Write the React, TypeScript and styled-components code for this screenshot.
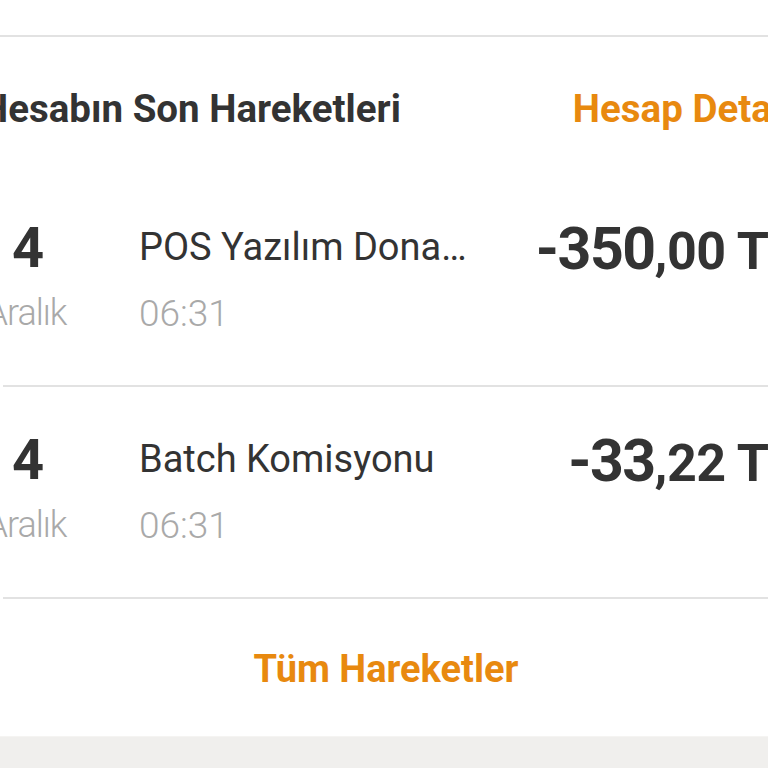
import styled, { createGlobalStyle } from "styled-components";

const GlobalStyle = createGlobalStyle`
  html, body {
    margin: 0;
    padding: 0;
    background: #ffffff;
  }
  body {
    font-family: Roboto, "Noto Sans", Arial, sans-serif;
    color: #333333;
    overflow: hidden;
  }
`;

type Movement = {
  day: string;
  month: string;
  title: string;
  time: string;
  whole: string;
  cents: string;
};

const movements: Movement[] = [
  {
    day: "4",
    month: "Aralık",
    title: "POS Yazılım Donanım Hizmet Bedeli",
    time: "06:31",
    whole: "-350",
    cents: ",00 TL",
  },
  {
    day: "4",
    month: "Aralık",
    title: "Batch Komisyonu",
    time: "06:31",
    whole: "-33",
    cents: ",22 TL",
  },
];

export default function App() {
  return (
    <Page>
      <GlobalStyle />
      <TopSpace />
      <Header>
        <HeaderTitle>Hesabın Son Hareketleri</HeaderTitle>
        <HeaderLink>Hesap Detayları</HeaderLink>
      </Header>
      <List>
        {movements.map((m, i) => (
          <Row key={i}>
            <DateCol>
              <Day>{m.day}</Day>
            </DateCol>
            <Title>{m.title}</Title>
            <Amount>
              <Whole>{m.whole}</Whole>
              <Cents>{m.cents}</Cents>
            </Amount>
            <DateCol>
              <Month>{m.month}</Month>
            </DateCol>
            <Time>{m.time}</Time>
          </Row>
        ))}
      </List>
      <Footer>
        <FooterLink>Tüm Hareketler</FooterLink>
      </Footer>
      <BottomStrip />
    </Page>
  );
}

const Page = styled.div`
  width: 768px;
  height: 768px;
  overflow: hidden;
  display: flex;
  flex-direction: column;
  background: #ffffff;
`;

const TopSpace = styled.div`
  height: 35px;
  flex-shrink: 0;
  border-bottom: 2px solid #e2e2e2;
`;

const Header = styled.div`
  height: 138px;
  box-sizing: border-box;
  padding-top: 6px;
  flex-shrink: 0;
  display: flex;
  align-items: center;
  gap: 172px;
  margin-left: -19px;
  white-space: nowrap;
`;

const HeaderTitle = styled.div`
  font-size: 38.5px;
  font-weight: 700;
  line-height: 1;
  color: #333333;
`;

const HeaderLink = styled.div`
  font-size: 38.5px;
  font-weight: 700;
  line-height: 1;
  color: #e8890f;
`;

const List = styled.div`
  margin-left: 3px;
  width: 797px;
  flex-shrink: 0;
`;

const Row = styled.div`
  height: 212px;
  box-sizing: border-box;
  border-bottom: 2px solid #e2e2e2;
  padding-top: 45px;
  display: grid;
  grid-template-columns: 50px minmax(0, 1fr) auto;
  grid-template-rows: 56px 36px;
  column-gap: 86px;
  row-gap: 18px;
  align-items: center;
  white-space: nowrap;
`;

const DateCol = styled.div`
  display: flex;
  flex-direction: column;
  align-items: center;
`;

const Day = styled.div`
  font-size: 56px;
  font-weight: 700;
  line-height: 1;
  color: #333333;
`;

const Title = styled.div`
  font-size: 38px;
  font-weight: 400;
  line-height: 1.2;
  color: #333333;
  overflow: hidden;
  text-overflow: ellipsis;
  margin-right: -28px;
`;

const Amount = styled.div`
  font-weight: 700;
  color: #333333;
  line-height: 1;
  text-align: right;
  margin-right: 4px;
`;

const Whole = styled.span`
  font-size: 59px;
  letter-spacing: -1.5px;
`;

const Cents = styled.span`
  font-size: 52px;
  letter-spacing: -0.5px;
`;

const Month = styled.div`
  font-size: 36px;
  font-weight: 300;
  line-height: 1;
  color: #a9a9a9;
  letter-spacing: -1px;
  margin-right: 4px;
  padding-top: 2px;
`;

const Time = styled.div`
  grid-column: 2 / 4;
  font-size: 37px;
  font-weight: 300;
  line-height: 1;
  color: #a9a9a9;
  padding-top: 2px;
`;

const Footer = styled.div`
  height: 137px;
  box-sizing: border-box;
  padding-top: 3px;
  flex-shrink: 0;
  display: flex;
  align-items: center;
  justify-content: center;
`;

const FooterLink = styled.div`
  font-size: 38px;
  font-weight: 700;
  line-height: 1;
  color: #e8890f;
  margin-left: 4px;
`;

const BottomStrip = styled.div`
  flex: 1;
  background: #f0efed;
  border-top: 1px solid #f5f4f2;
`;
